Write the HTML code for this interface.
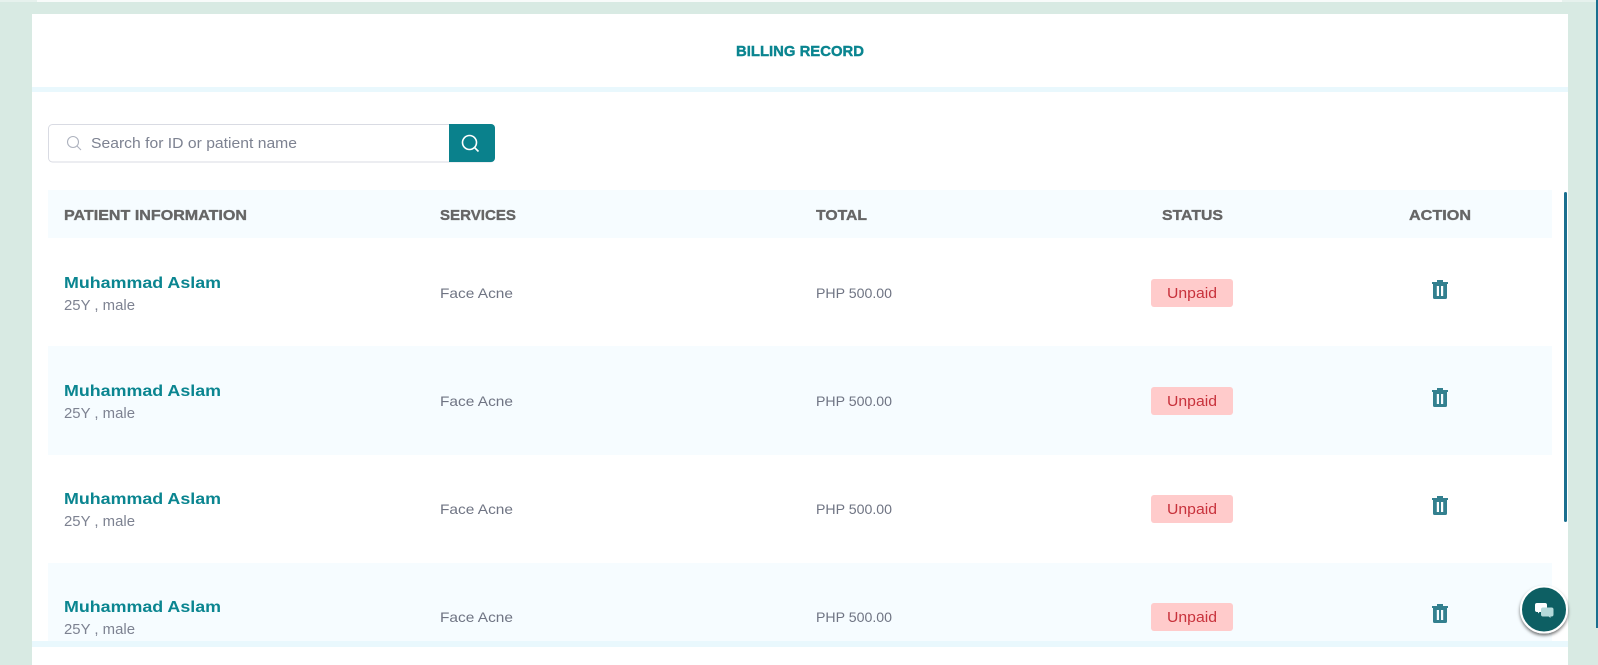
<!DOCTYPE html>
<html><head><meta charset="utf-8"><title>Billing Record</title>
<style>
html,body{margin:0;padding:0;width:1598px;height:665px;overflow:hidden;background:#d8eae3}
svg{display:block;font-family:"Liberation Sans",Arial,sans-serif}
.h{font-weight:700;font-size:15px;fill:#666666;stroke:#666666;stroke-width:.35}
.n{font-weight:700;font-size:16px;fill:#0a8590}
.s{font-size:14.5px;fill:#7d8291}
.c{font-size:14px;fill:#6f7483}
.u{font-size:14.5px;fill:#c8323c}
</style></head><body>
<svg width="1598" height="665" viewBox="0 0 1598 665" xmlns="http://www.w3.org/2000/svg">
<defs>
<filter id="sh" x="-30%" y="-30%" width="160%" height="160%"><feDropShadow dx="0" dy="2" stdDeviation="1.5" flood-color="#000" flood-opacity=".55"/></filter>
<g id="tr"><path d="M1432 282h16v2h-16zM1437 280h6v2.500h-6z" fill="#33808f"/><path fill-rule="evenodd" d="M1433 283.500h14v14a1.500 1.500 0 0 1-1.500 1.500h-11a1.500 1.500 0 0 1-1.500-1.500zM1436.800 286v10h2.200v-10zM1441 286v10h2.200v-10z" fill="#33808f"/></g>
</defs>
<rect x="0" y="0" width="1598" height="665" fill="#d8eae3"/>
<rect x="0" y="0" width="37" height="2" fill="#e6f1ed"/>
<rect x="37" y="0" width="1525" height="2" fill="#f8fbfa"/>
<rect x="1562" y="0" width="34" height="2" fill="#e6f1ed"/>
<rect x="1596" y="0" width="2" height="628" fill="#1a6f8f"/>
<rect x="32" y="14" width="1536" height="651" fill="#ffffff"/>
<rect x="32" y="87" width="1536" height="5" fill="#e9f8fd"/>
<text x="736" y="56" font-size="15" font-weight="700" fill="#0a8590" stroke="#0a8590" stroke-width=".4" textLength="128" lengthAdjust="spacingAndGlyphs">BILLING RECORD</text>

<rect x="48.500" y="124.500" width="446" height="37.500" rx="4" fill="#fff" stroke="#d9dbe3"/>
<path d="M449 124h42a4 4 0 0 1 4 4v30a4 4 0 0 1-4 4h-42z" fill="#0a818c"/>
<circle cx="73" cy="142" r="5.500" fill="none" stroke="#adb2be" stroke-width="1.100"/><path d="M77 146l4 4" stroke="#adb2be" stroke-width="1.100" fill="none"/>
<text x="91" y="148" font-size="14.500" fill="#7d8291" textLength="206" lengthAdjust="spacingAndGlyphs">Search for ID or patient name</text>
<circle cx="469.500" cy="142.500" r="7" fill="none" stroke="#fff" stroke-width="1.600"/><path d="M474.500 147.500l4 4" stroke="#fff" stroke-width="1.600" fill="none"/>

<rect x="48" y="190" width="1504" height="48" fill="#f6fcff"/>
<text class="h" x="64" y="220" textLength="183" lengthAdjust="spacingAndGlyphs">PATIENT INFORMATION</text>
<text class="h" x="440" y="220" textLength="76" lengthAdjust="spacingAndGlyphs">SERVICES</text>
<text class="h" x="816" y="220" textLength="51" lengthAdjust="spacingAndGlyphs">TOTAL</text>
<text class="h" x="1162" y="220" textLength="61" lengthAdjust="spacingAndGlyphs">STATUS</text>
<text class="h" x="1409" y="220" textLength="62" lengthAdjust="spacingAndGlyphs">ACTION</text>

<rect x="48" y="346" width="1504" height="109" fill="#f6fcff"/>
<rect x="48" y="563" width="1504" height="78" fill="#f6fcff"/>

<g>
<text class="n" x="64" y="288" textLength="157" lengthAdjust="spacingAndGlyphs">Muhammad Aslam</text>
<text class="s" x="64" y="310" textLength="71" lengthAdjust="spacingAndGlyphs">25Y , male</text>
<text class="c" x="440" y="298" textLength="73" lengthAdjust="spacingAndGlyphs">Face Acne</text>
<text class="c" x="816" y="298" textLength="76" lengthAdjust="spacingAndGlyphs">PHP 500.00</text>
<rect x="1151" y="279" width="82" height="28" rx="3" fill="#ffcbcb"/>
<text class="u" x="1167" y="298" textLength="50" lengthAdjust="spacingAndGlyphs">Unpaid</text>
<use href="#tr"/>
</g>
<g>
<text class="n" x="64" y="396" textLength="157" lengthAdjust="spacingAndGlyphs">Muhammad Aslam</text>
<text class="s" x="64" y="418" textLength="71" lengthAdjust="spacingAndGlyphs">25Y , male</text>
<text class="c" x="440" y="406" textLength="73" lengthAdjust="spacingAndGlyphs">Face Acne</text>
<text class="c" x="816" y="406" textLength="76" lengthAdjust="spacingAndGlyphs">PHP 500.00</text>
<rect x="1151" y="387" width="82" height="28" rx="3" fill="#ffcbcb"/>
<text class="u" x="1167" y="406" textLength="50" lengthAdjust="spacingAndGlyphs">Unpaid</text>
<use href="#tr" y="108"/>
</g>
<g>
<text class="n" x="64" y="504" textLength="157" lengthAdjust="spacingAndGlyphs">Muhammad Aslam</text>
<text class="s" x="64" y="526" textLength="71" lengthAdjust="spacingAndGlyphs">25Y , male</text>
<text class="c" x="440" y="514" textLength="73" lengthAdjust="spacingAndGlyphs">Face Acne</text>
<text class="c" x="816" y="514" textLength="76" lengthAdjust="spacingAndGlyphs">PHP 500.00</text>
<rect x="1151" y="495" width="82" height="28" rx="3" fill="#ffcbcb"/>
<text class="u" x="1167" y="514" textLength="50" lengthAdjust="spacingAndGlyphs">Unpaid</text>
<use href="#tr" y="216"/>
</g>
<g>
<text class="n" x="64" y="612" textLength="157" lengthAdjust="spacingAndGlyphs">Muhammad Aslam</text>
<text class="s" x="64" y="634" textLength="71" lengthAdjust="spacingAndGlyphs">25Y , male</text>
<text class="c" x="440" y="622" textLength="73" lengthAdjust="spacingAndGlyphs">Face Acne</text>
<text class="c" x="816" y="622" textLength="76" lengthAdjust="spacingAndGlyphs">PHP 500.00</text>
<rect x="1151" y="603" width="82" height="28" rx="3" fill="#ffcbcb"/>
<text class="u" x="1167" y="622" textLength="50" lengthAdjust="spacingAndGlyphs">Unpaid</text>
<use href="#tr" y="324"/>
</g>

<rect x="32" y="641" width="1536" height="6" fill="#e9f8fd"/>
<rect x="1564" y="192" width="3" height="330" rx="1.500" fill="#1a6f8f"/>

<circle cx="1544" cy="609.500" r="23" fill="#075e63" stroke="#fff" stroke-width="2" filter="url(#sh)"/>
<path d="M1537 603h8a2 2 0 0 1 2 2v5a2 2 0 0 1-2 2h-5.500l-1.500 1.500v-1.500h-1a2 2 0 0 1-2-2v-5a2 2 0 0 1 2-2z" fill="#fff"/>
<path d="M1543 607.500h8.500a2 2 0 0 1 2 2v5a2 2 0 0 1-2 2h-1v1.500l-1.800-1.500h-5.700a2 2 0 0 1-2-2v-5a2 2 0 0 1 2-2z" fill="#b4dada"/>
</svg>
</body></html>
